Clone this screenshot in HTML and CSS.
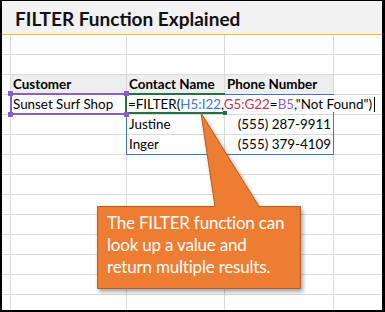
FILE: index.html
```html
<!DOCTYPE html>
<html>
<head>
<meta charset="utf-8">
<link rel="stylesheet" href="styles.css">
</head>
<body>
<div class="frame">
  <div class="title">FILTER Function Explained</div>
  <div class="sheet">
    <div class="c"></div><div class="c"></div><div class="c"></div><div class="c"></div><div class="c e"></div>
    <div class="c"></div><div class="c"></div><div class="c"></div><div class="c"></div><div class="c e"></div>

    <div class="c"></div><div class="c hd">Customer</div><div class="c hd">Contact Name</div><div class="c hd">Phone Number</div><div class="c e"></div>

    <div class="c"></div><div class="c">Sunset Surf Shop</div><div class="c"></div><div class="c"></div><div class="c e"></div>

    <div class="c"></div><div class="c"></div><div class="c">Justine</div><div class="c num">(555) 287-9911</div><div class="c e"></div>
    <div class="c"></div><div class="c"></div><div class="c">Inger</div><div class="c num">(555) 379-4109</div><div class="c e"></div>

    <div class="c"></div><div class="c"></div><div class="c"></div><div class="c"></div><div class="c e"></div>
    <div class="c"></div><div class="c"></div><div class="c"></div><div class="c"></div><div class="c e"></div>
    <div class="c"></div><div class="c"></div><div class="c"></div><div class="c"></div><div class="c e"></div>
    <div class="c"></div><div class="c"></div><div class="c"></div><div class="c"></div><div class="c e"></div>
    <div class="c"></div><div class="c"></div><div class="c"></div><div class="c"></div><div class="c e"></div>
    <div class="c"></div><div class="c"></div><div class="c"></div><div class="c"></div><div class="c e"></div>
    <div class="c"></div><div class="c"></div><div class="c"></div><div class="c"></div><div class="c e"></div>
    <div class="c"></div><div class="c"></div><div class="c"></div><div class="c"></div><div class="c e"></div>

    <div class="spill"></div>
    <div class="ref-box"></div>
    <div class="active-box"></div>
    <div class="editor">=FILTER(<span class="r-blue">H5:I22</span>,<span class="r-red">G5:G22</span>=<span class="r-purple">B5</span>,"Not Found")<span class="caret"></span></div>
    <div class="fill-handle"></div>
    <div class="handle h-tl"></div>
    <div class="handle h-tr"></div>
    <div class="handle h-bl"></div>
    <div class="handle h-br"></div>
  </div>

  <svg class="callout-shape" width="385" height="312" viewBox="0 0 385 312">
    <defs>
      <filter id="sh" x="-20%" y="-20%" width="140%" height="140%">
        <feDropShadow dx="2" dy="3" stdDeviation="2" flood-color="#000" flood-opacity="0.35"/>
      </filter>
    </defs>
    <path d="M97.5 206.5 H215 L201 113 L259 206.5 H300.5 V288.5 H97.5 Z" fill="#ed7d31" stroke="#b15b22" stroke-width="1" filter="url(#sh)"/>
  </svg>
  <div class="callout-text">The FILTER function can<br>look up a value and<br>return multiple results.</div>
</div>
</body>
</html>
```

FILE: styles.css
```css
* { box-sizing: border-box; }
html, body { margin: 0; padding: 0; background: #fff; }
body { font-family: "Lato", "Noto Sans", sans-serif; }

.frame {
  position: relative;
  width: 385px;
  height: 312px;
  border-style: solid;
  border-color: #000;
  border-width: 1px 3px 2px 2px;
  overflow: hidden;
  background: #fff;
}

.title {
  height: 34px;
  background: #f2f2f2;
  border-bottom: 1px solid #ffc000;
  padding-left: 13px;
  padding-top: 2px;
  font-weight: 700;
  font-size: 19px;
  line-height: 32px;
  color: #111;
}

.sheet {
  position: relative;
  display: grid;
  grid-template-columns: 9px 116px 98px 109px 48px;
  grid-auto-rows: 20px;
}

.c {
  border-right: 1px solid #dadada;
  border-bottom: 1px solid #dadada;
  padding: 0 2px;
  font-size: 13.4px;
  line-height: 19px;
  color: #000;
  white-space: nowrap;
  overflow: hidden;
}
.c.e { border-right: none; }
.c.hd { background: #eeeeee; font-weight: 700; }
.c.num { text-align: right; }

.spill {
  position: absolute;
  left: 124px; top: 59px;
  width: 208px; height: 61px;
  border: 1px solid #4472c4;
}
.ref-box {
  position: absolute;
  left: 8px; top: 58px;
  width: 117px; height: 22px;
  border: 2px solid #8a5fc2;
}
.active-box {
  position: absolute;
  left: 123px; top: 58px;
  width: 100px; height: 21px;
  border: 2px solid #217346;
}
.editor {
  position: absolute;
  left: 125px; top: 60px;
  width: 250px;
  height: 17px;
  padding-left: 1px;
  background: #fff;
  font-size: 13.4px;
  line-height: 19px;
  color: #000;
  white-space: nowrap;
  overflow: visible;
}
.r-blue { color: #3a78c9; }
.r-red { color: #c8334f; }
.r-purple { color: #8a5fc2; }
.caret {
  display: inline-block;
  width: 1px;
  height: 15px;
  background: #000;
  margin-left: 2px;
  vertical-align: -3px;
}
.fill-handle {
  position: absolute;
  left: 221px; top: 76px;
  width: 4px; height: 4px;
  background: #217346;
}
.handle {
  position: absolute;
  width: 5px; height: 5px;
  background: #8a5fc2;
}
.h-tl { left: 6px; top: 56px; }
.h-tr { left: 122px; top: 56px; }
.h-bl { left: 6px; top: 77px; }
.h-br { left: 122px; top: 77px; }

.callout-shape {
  position: absolute;
  left: -2px; top: -1px;
}
.callout-text {
  position: absolute;
  left: 105px; top: 211px;
  color: #fff;
  font-size: 17px;
  letter-spacing: -0.2px;
  line-height: 22px;
}
```
